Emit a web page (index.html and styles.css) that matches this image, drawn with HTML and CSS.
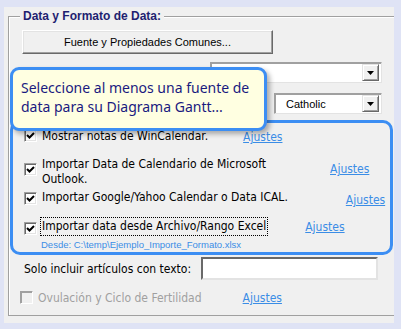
FILE: index.html
```html
<!DOCTYPE html>
<html lang="es">

<head>
    <meta charset="utf-8">
    <title>Data y Formato de Data</title>
    <link rel="stylesheet" href="styles.css">
</head>

<body>

    <div class="panel">
        <div class="grupo">
            <span class="leyenda">Data y Formato de Data:</span>

            <button class="boton">Fuente y Propiedades Comunes...</button>

            <div class="combo combo-uno">
                <span class="combo-texto"></span>
                <span class="combo-flecha"><svg width="7" height="4" viewBox="0 0 7 4"><path d="M0 0 H7 L3.5 4 Z" fill="#000"/></svg></span>
            </div>

            <div class="combo combo-dos">
                <span class="combo-texto">Catholic</span>
                <span class="combo-flecha"><svg width="7" height="4" viewBox="0 0 7 4"><path d="M0 0 H7 L3.5 4 Z" fill="#000"/></svg></span>
            </div>

            <div class="fuentes">
                <div class="fila fila-1">
                    <span class="chk"><svg width="9" height="9" viewBox="0 0 9 9"><path d="M1 4 L3.5 6.5 L8 2" stroke="#000" stroke-width="2" fill="none"/></svg></span>
                    <span class="etiqueta">Mostrar notas de WinCalendar.</span>
                    <a class="ajustes" href="#">Ajustes</a>
                </div>
                <div class="fila fila-2">
                    <span class="chk"><svg width="9" height="9" viewBox="0 0 9 9"><path d="M1 4 L3.5 6.5 L8 2" stroke="#000" stroke-width="2" fill="none"/></svg></span>
                    <span class="etiqueta">Importar Data de Calendario de Microsoft<br>Outlook.</span>
                    <a class="ajustes" href="#">Ajustes</a>
                </div>
                <div class="fila fila-3">
                    <span class="chk"><svg width="9" height="9" viewBox="0 0 9 9"><path d="M1 4 L3.5 6.5 L8 2" stroke="#000" stroke-width="2" fill="none"/></svg></span>
                    <span class="etiqueta">Importar Google/Yahoo Calendar o Data ICAL.</span>
                    <a class="ajustes" href="#">Ajustes</a>
                </div>
                <div class="fila fila-4">
                    <span class="chk"><svg width="9" height="9" viewBox="0 0 9 9"><path d="M1 4 L3.5 6.5 L8 2" stroke="#000" stroke-width="2" fill="none"/></svg></span>
                    <span class="etiqueta foco">Importar data desde Archivo/Rango Excel</span>
                    <a class="ajustes" href="#">Ajustes</a>
                </div>
                <div class="desde">Desde: C:\temp\Ejemplo_Importe_Formato.xlsx</div>
            </div>

            <div class="fila-texto">
                <span class="etiqueta">Solo incluir artículos con texto:</span>
                <span class="campo"></span>
            </div>

            <div class="fila fila-ovul">
                <span class="chk chk-off"></span>
                <span class="etiqueta apagada">Ovulación y Ciclo de Fertilidad</span>
                <a class="ajustes" href="#">Ajustes</a>
            </div>
        </div>

        <div class="globo">Seleccione al menos una fuente de data para su Diagrama Gantt...</div>
    </div>

</body>

</html>
```

FILE: styles.css
```css
body {
    margin: 0;
    background-color: #dfe3f5;
    font-family: "DejaVu Sans Condensed", "DejaVu Sans", sans-serif;
    font-size: 12px;
    color: #000;
}

.panel {
    position: relative;
    margin: 7px 7px 0 4px;
    height: 316px;
    background-color: #f0f0f0;
}

/* marco del grupo */
.grupo {
    position: relative;
    top: 9px;
    margin-left: 4px;
    height: 300px;
    box-sizing: border-box;
    border: 1px solid #a0a0a0;
    border-right: none;
    box-shadow: inset 1px 1px 0 #fff;
    padding-top: 1px;
}

.leyenda {
    position: absolute;
    top: -8px;
    left: 11px;
    padding: 0 3px;
    background-color: #f0f0f0;
    font-family: "Liberation Sans", sans-serif;
    font-weight: bold;
    font-size: 12px;
    color: #1f1f70;
}

.boton {
    display: block;
    margin: 12px 0 0 13px;
    width: 251px;
    height: 24px;
    background-color: #f0f0f0;
    border: 1px solid;
    border-color: #fff #696969 #696969 #fff;
    box-shadow: inset -1px -1px 0 #a0a0a0, inset 1px 1px 0 #e3e3e3;
    font-family: "Liberation Sans", sans-serif;
    font-size: 11px;
    color: #000;
    padding: 0;
}

.combo {
    display: flex;
    justify-content: space-between;
    align-items: center;
    box-sizing: border-box;
    height: 21px;
    background-color: #fff;
    border: 1px solid;
    border-color: #a0a0a0 #e3e3e3 #e3e3e3 #a0a0a0;
    box-shadow: inset 1px 1px 0 #a0a0a0;
    padding: 1px 2px 1px 2px;
}

.combo-uno {
    margin: 8px 0 0 201px;
    width: 172px;
}

.combo-dos {
    margin: 10px 0 0 265px;
    width: 108px;
}

.combo-texto {
    padding-left: 9px;
    font-size: 11px;
    font-family: "Liberation Sans", sans-serif;
}

.combo-flecha {
    display: flex;
    align-items: center;
    justify-content: center;
    box-sizing: border-box;
    width: 17px;
    height: 17px;
    background-color: #f0f0f0;
    border: 1px solid;
    border-color: #e3e3e3 #696969 #696969 #e3e3e3;
    box-shadow: inset 1px 1px 0 #fff, inset -1px -1px 0 #a0a0a0;
}

/* caja azul de fuentes */
.fuentes {
    margin: 6px 0 0 1px;
    width: 383px;
    height: 135px;
    box-sizing: border-box;
    border: 3px solid #3c8ef3;
    border-radius: 10px;
}

.fila {
    display: flex;
    align-items: flex-start;
    margin-left: 11px;
    line-height: 15px;
}

.chk {
    display: flex;
    align-items: center;
    justify-content: center;
    flex: none;
    box-sizing: border-box;
    width: 13px;
    height: 13px;
    background-color: #fff;
    border: 1px solid;
    border-color: #a0a0a0 #fff #fff #a0a0a0;
    box-shadow: inset 1px 1px 0 #696969, inset -1px -1px 0 #e3e3e3;
}

.chk-off {
    background-color: #f0f0f0;
    border-color: #a0a0a0 #fff #fff #a0a0a0;
    box-shadow: inset 1px 1px 0 #a0a0a0;
}

.etiqueta {
    margin-left: 5px;
}

.foco {
    outline: 1px dotted #000;
    outline-offset: 1px;
}

.apagada {
    color: #a0a0a0;
}

.ajustes {
    color: #3b8de6;
    text-decoration: underline;
}

.fila-1 {
    margin-top: 6px;
}

.fila-1 .ajustes {
    margin: 1px 0 -1px 35px;
}

.fila-2 {
    margin-top: 13px;
}

.fila-2 .chk {
    margin-top: 6px;
}

.fila-2 .ajustes {
    margin: 5px 0 -5px 64px;
}

.fila-3 {
    margin-top: 3px;
}

.fila-3 .chk {
    margin-top: 2px;
}

.fila-3 .ajustes {
    margin: 3px 0 -3px 58px;
}

.fila-4 {
    margin-top: 14px;
}

.fila-4 .chk {
    margin-top: 3px;
}

.fila-4 .ajustes {
    margin: 1px 0 -1px 39px;
}

.desde {
    margin: 4px 0 0 28px;
    font-family: "Liberation Sans", sans-serif;
    font-size: 9.5px;
    line-height: 11px;
    color: #3b8de6;
}

.fila-texto {
    display: flex;
    align-items: center;
    margin-top: 2px;
}

.fila-texto .etiqueta {
    margin-left: 15px;
    width: 177px;
}

.campo {
    box-sizing: border-box;
    width: 177px;
    height: 23px;
    background-color: #fff;
    border: 2px solid;
    border-color: #696969 #e3e3e3 #e3e3e3 #696969;
}

.fila-ovul {
    margin-top: 11px;
}

.fila-ovul .ajustes {
    margin-left: 41px;
}

/* globo de aviso */
.globo {
    position: absolute;
    left: 6px;
    top: 60px;
    width: 257px;
    height: 64px;
    box-sizing: border-box;
    padding: 8px 8px 0 8px;
    background-color: #ffffe1;
    border: 3px solid #3c8ef3;
    border-radius: 9px;
    box-shadow: 3px 3px 5px rgba(0, 0, 0, 0.3);
    font-family: "Noto Sans", sans-serif;
    font-size: 14px;
    line-height: 19px;
    color: #1a1a80;
}
```
